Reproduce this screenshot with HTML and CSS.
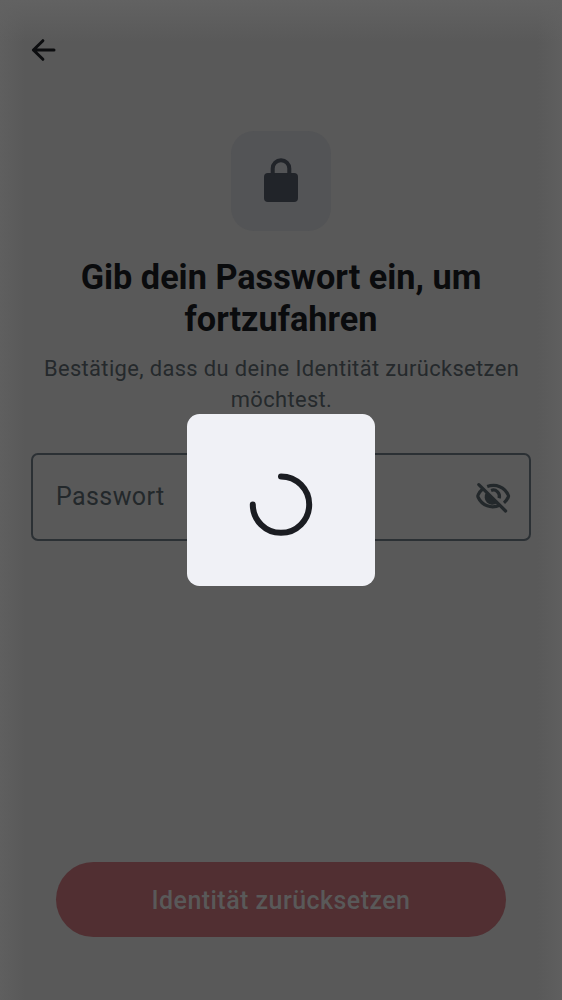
FILE: index.html
```html
<!DOCTYPE html>
<html lang="de">
<head>
<meta charset="utf-8">
<title>Identität zurücksetzen</title>
<link rel="stylesheet" href="styles.css">
</head>
<body>
<main class="screen">
  <header class="topbar">
    <svg class="back" viewBox="0 0 26 26" fill="none" stroke="#0c0d0f" stroke-width="3" stroke-linecap="round" stroke-linejoin="round"><path d="M23 13H2.4M11.9 3.7 2.4 13l9.5 9.3"/></svg>
  </header>
  <section class="intro">
    <div class="badge">
      <svg width="38" height="48" viewBox="0 0 38 48"><rect x="2" y="16" width="34" height="29" rx="4" fill="#212429"/><path d="M10.7 19v-7.5a8.3 8.3 0 0 1 16.6 0V19" fill="none" stroke="#212429" stroke-width="4"/></svg>
    </div>
    <h1 class="title">Gib dein Passwort ein, um<br>fortzufahren</h1>
    <p class="subtitle">Bestätige, dass du deine Identität zurücksetzen<br>möchtest.</p>
  </section>
  <div class="field">
    <span class="label">Passwort</span>
    <svg class="eye" viewBox="0 0 38 38" fill="none" stroke="#23282b" stroke-width="3.2" stroke-linecap="round"><path d="M13.2 8.6C22 5.3 30.8 9.3 34.3 17.2a2 2 0 0 1 0 1.8c-1 2.3-2.4 4.3-4.3 5.9" stroke-linecap="butt"/><path d="M8.7 11.1c-2 1.6-3.6 3.7-4.7 6.1a2 2 0 0 0 0 1.8c3.8 8.5 13.4 12.2 22 8" stroke-linecap="butt"/><path d="M12.1 14.5a7.7 7.7 0 0 0 10.8 10.7z" fill="#23282b" stroke="none"/><path d="M17.1 12.4a6.2 6.2 0 0 1 8 7.8" stroke-linecap="butt"/><path d="M4.8 6.6 31.6 33"/></svg>
  </div>
  <footer class="actions"><button class="reset">Identität zurücksetzen</button></footer>
</main>
<div class="dialog">
  <svg width="64" height="64" viewBox="0 0 64 64" fill="none" stroke="#1b1d22" stroke-width="6" stroke-linecap="round"><path d="M32 4.4a28.2 28.2 0 1 1-28.2 28.2"/></svg>
</div>
</body>
</html>
```
FILE: styles.css
```css
* { box-sizing: border-box; }
body { margin: 0; font-family: Roboto, sans-serif; background: #595959; }
.screen {
  width: 562px;
  height: 1000px;
  padding: 0 31px;
  display: flex;
  flex-direction: column;
  background:
    linear-gradient(to bottom, #626262, rgba(98, 98, 98, 0) 42px),
    linear-gradient(to right, #5f5f5f, rgba(95, 95, 95, 0) 25px, rgba(95, 95, 95, 0) 537px, #5f5f5f),
    #595959;
}
.topbar { height: 131px; padding-top: 37px; }
.back { display: block; width: 26px; height: 26px; }
.intro { display: flex; flex-direction: column; align-items: center; text-align: center; height: 322px; }
.badge {
  width: 100px;
  height: 100px;
  border-radius: 23px;
  background: #535456;
  display: flex;
  align-items: center;
  justify-content: center;
}
.title { margin: 25px 0 0; font-size: 34.25px; line-height: 42.2px; font-weight: 700; color: #0a0b0d; white-space: nowrap; }
.subtitle { margin: 13px 0 0; padding-left: 1px; font-size: 21.9px; line-height: 31px; letter-spacing: .37px; color: #25292c; white-space: nowrap; }
.field {
  height: 88px;
  border: 2px solid #2b3034;
  border-radius: 7px;
  padding: 0 17px 0 23px;
  display: flex;
  align-items: center;
  justify-content: space-between;
}
.label { padding-bottom: 1px; font-size: 25px; letter-spacing: .4px; color: #23282b; }
.eye { width: 38px; height: 38px; }
.actions { margin-top: auto; padding: 0 25px 63px; }
.reset {
  display: block;
  width: 100%;
  height: 75px;
  border: 0;
  border-radius: 38px;
  padding-top: 2px;
  background: #512f32;
  color: #595959;
  font: 500 25px Roboto, sans-serif;
  letter-spacing: .45px;
}
.dialog {
  position: absolute;
  left: 187px;
  top: 414px;
  width: 188px;
  height: 172px;
  border-radius: 12.5px;
  background: #f0f1f6;
  display: flex;
  align-items: center;
  justify-content: center;
}
.dialog svg { margin-top: 8px; }
```
